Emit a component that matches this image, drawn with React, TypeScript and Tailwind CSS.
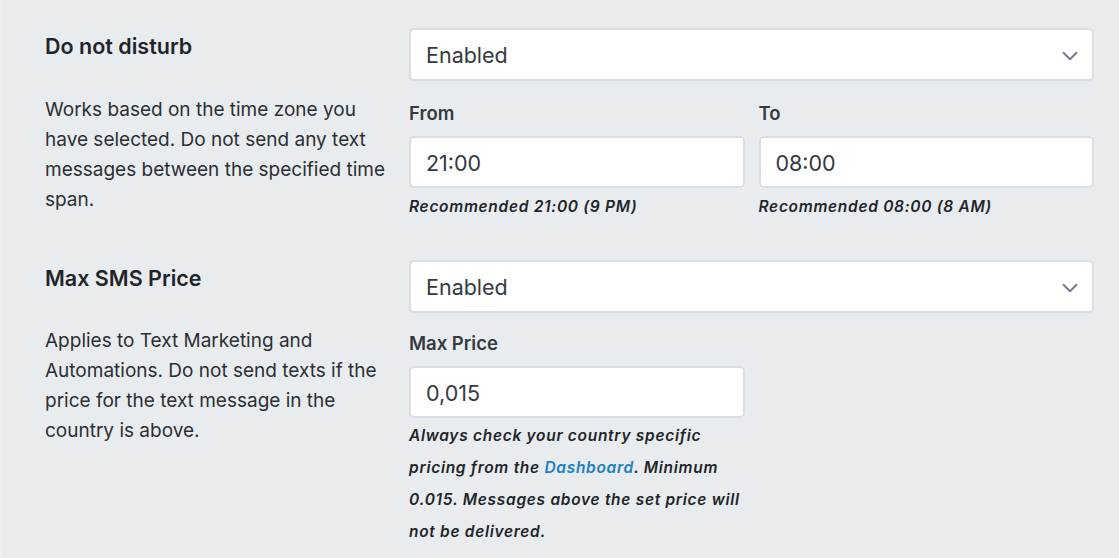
import { ChevronDown } from "lucide-react"

const font = { fontFamily: "Inter, 'Noto Sans', sans-serif" }

function Select() {
  return (
    <div className="flex items-center justify-between h-[53px] bg-white border-2 border-[#d8dee4] rounded-[5px] pl-[15px] pr-[9px]">
      <span className="text-[21.5px] text-[#343a40] mt-[2px]">Enabled</span>
      <ChevronDown className="w-[26px] h-[26px] text-[#6f7f8f] mt-[2px]" strokeWidth={1.8} />
    </div>
  )
}

function Field({ value }: { value: string }) {
  return (
    <div className="flex items-center h-[52px] bg-white border-2 border-[#d8dee4] rounded-[5px] pl-[15px]">
      <span className="text-[21.5px] text-[#343a40] mt-[2px]">{value}</span>
    </div>
  )
}

function Label({ children }: { children: React.ReactNode }) {
  return <div className="text-[18.5px] font-semibold text-[#343a40] leading-[27px] mb-[9px]">{children}</div>
}

function Hint({ children }: { children: React.ReactNode }) {
  return (
    <div className="text-[15.5px] italic font-semibold tracking-[0.7px] text-[#212529] leading-[22px] mt-[8px]">
      {children}
    </div>
  )
}

export default function App() {
  return (
    <div className="w-[1119px] h-[558px] overflow-hidden bg-[#e9ecef] border-l-[3px] border-[#eef0f3] pl-[42px] pt-[28px]" style={font}>
      {/* Do not disturb */}
      <div className="flex gap-[19px]">
        <div className="w-[345px] shrink-0">
          <h3 className="text-[21.5px] font-semibold text-[#212529] leading-[30px] mt-[3px]">Do not disturb</h3>
          <p className="text-[19px] text-[#2b2f33] leading-[30px] mt-[34px]">
            Works based on the time zone you have selected. Do not send any text messages between the specified time span.
          </p>
        </div>
        <div className="w-[685px]">
          <Select />
          <div className="grid grid-cols-2 gap-[14px] mt-[19px]">
            <div>
              <Label>From</Label>
              <Field value="21:00" />
              <Hint>Recommended 21:00 (9 PM)</Hint>
            </div>
            <div>
              <Label>To</Label>
              <Field value="08:00" />
              <Hint>Recommended 08:00 (8 AM)</Hint>
            </div>
          </div>
        </div>
      </div>

      {/* Max SMS Price */}
      <div className="flex gap-[19px] mt-[42px]">
        <div className="w-[345px] shrink-0">
          <h3 className="text-[21.5px] font-semibold text-[#212529] leading-[30px] mt-[3px]">Max SMS Price</h3>
          <p className="text-[19px] text-[#2b2f33] leading-[30px] mt-[33px]">
            Applies to Text Marketing and Automations. Do not send texts if the price for the text message in the country is above.
          </p>
        </div>
        <div className="w-[685px]">
          <Select />
          <div className="grid grid-cols-2 gap-[14px] mt-[17px]">
            <div>
              <Label>Max Price</Label>
              <Field value="0,015" />
              <p className="text-[15.5px] italic font-semibold tracking-[0.7px] text-[#212529] leading-[32px] mt-[2px]">
                Always check your country specific pricing from the{" "}
                <a className="text-[#1b7fc3]">Dashboard</a>. Minimum 0.015. Messages above the set price will not be delivered.
              </p>
            </div>
          </div>
        </div>
      </div>
    </div>
  )
}
